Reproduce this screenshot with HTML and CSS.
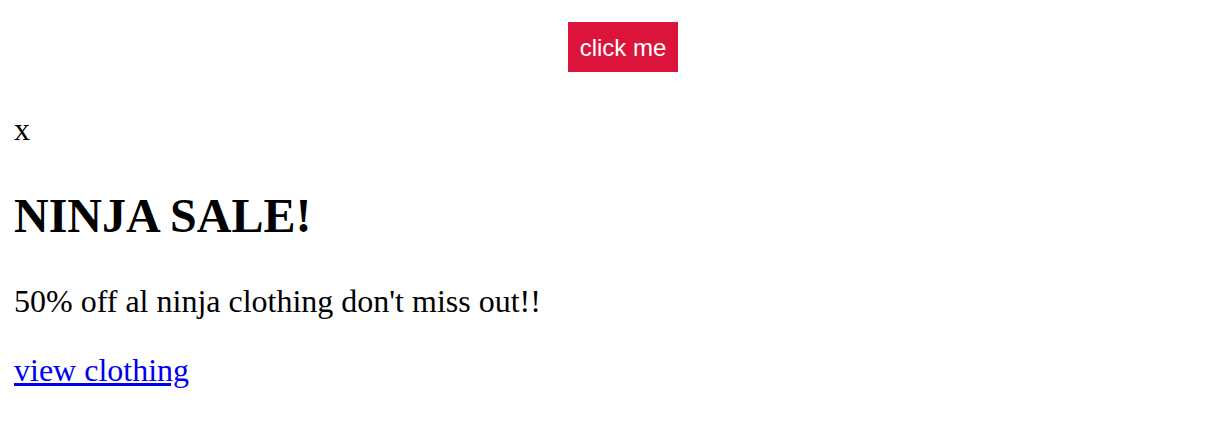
FILE: index.html
```html
<!DOCTYPE html>
<html>
<head>
<meta charset="utf-8">
<link rel="stylesheet" href="styles.css">
</head>
<body>
  <div class="bar">
    <button class="btn">click me</button>
  </div>
  <div class="modal">
    <div class="close">x</div>
    <h1 class="title">NINJA SALE!</h1>
    <p class="text">50% off al ninja clothing don't miss out!!</p>
    <p class="text"><a class="link" href="#">view clothing</a></p>
  </div>
</body>
</html>
```

FILE: styles.css
```css
html, body {
  background: #ffffff;
}
body {
  margin: 0;
  padding: 0 14px;
  font-family: "Liberation Serif", "Times New Roman", serif;
  font-size: 32px;
  color: #000;
}
.bar {
  display: flex;
  justify-content: center;
  padding-top: 22px;
  padding-left: 40px;
}
.btn {
  background: #dc143c;
  color: #fff;
  border: none;
  font-family: "Liberation Sans", Arial, sans-serif;
  font-size: 24px;
  width: 110px;
  height: 50px;
  padding: 2px 0 0;
}
.modal {
  padding-top: 39px;
}
.close {
  font-size: 32px;
}
.title {
  font-size: 48px;
  font-weight: bold;
  margin: 40px 0;
}
.text {
  margin: 32px 0;
}
.link {
  color: #0000ee;
}
```
